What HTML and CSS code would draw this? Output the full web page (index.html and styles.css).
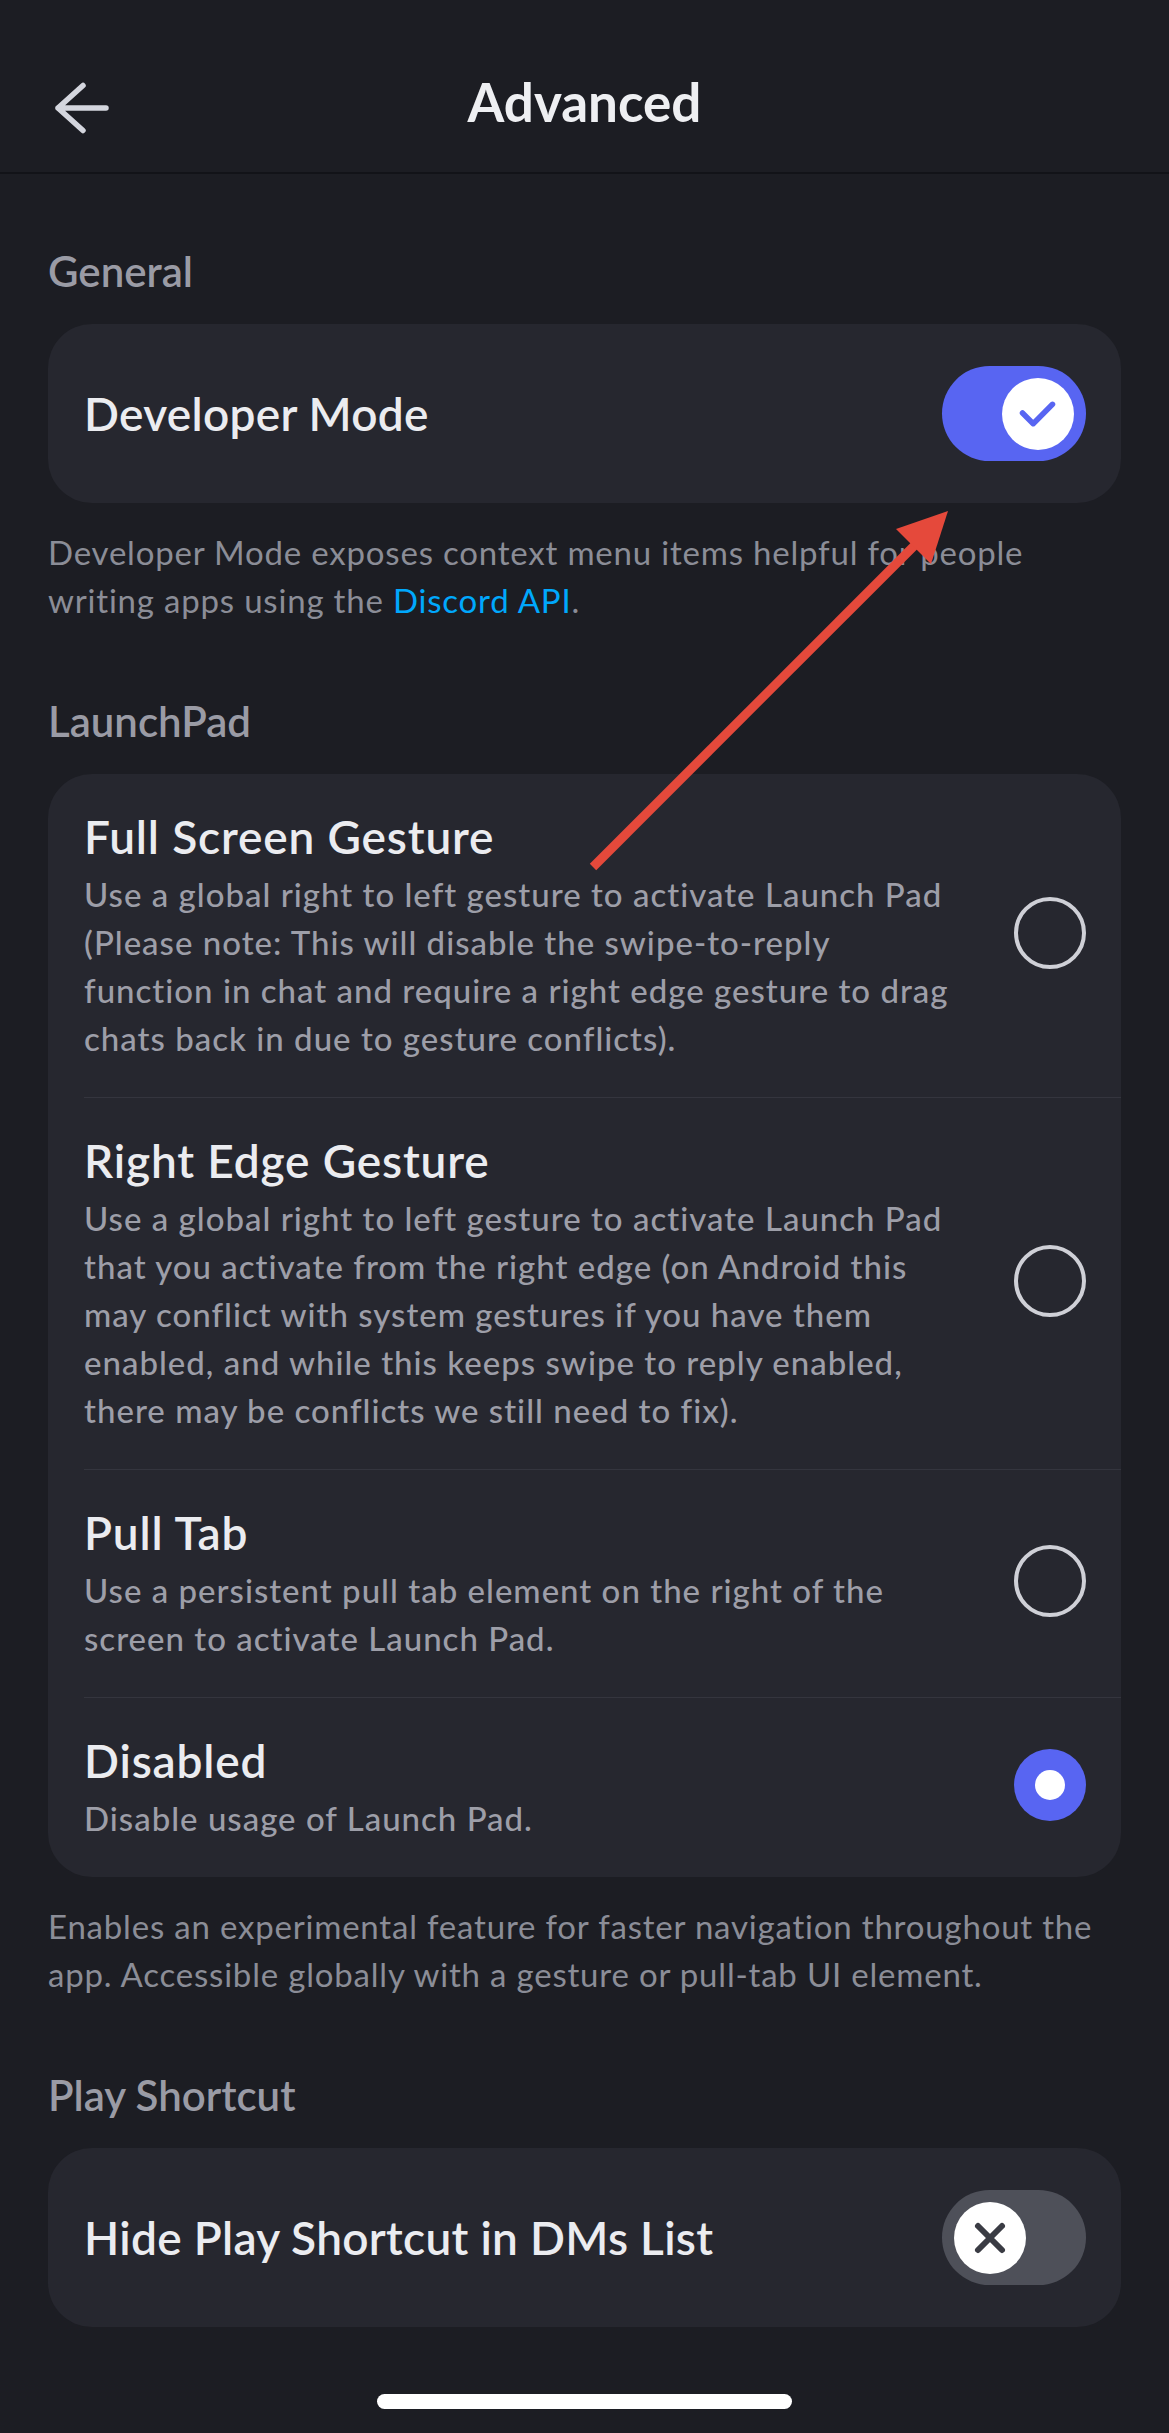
FILE: index.html
```html
<!DOCTYPE html>
<html lang="en">
<head>
<meta charset="utf-8">
<title>Advanced</title>
<link rel="stylesheet" href="styles.css">
</head>
<body>
<div class="screen">
  <header class="topbar">
    <button class="back" aria-label="Back">
      <svg width="60" height="56" viewBox="0 0 60 56"><path d="M30 5.5 L5 28 L30 50.5 M5 28 H53" fill="none" stroke="#d4d6de" stroke-width="5.5" stroke-linecap="round" stroke-linejoin="round"/></svg>
    </button>
    <h1 class="title">Advanced</h1>
    <span class="spacer"></span>
  </header>

  <main class="content">
    <section class="group">
      <h2 class="group-label">General</h2>
      <div class="card">
        <div class="row">
          <span class="row-title">Developer Mode</span>
          <span class="toggle on">
            <span class="knob">
              <svg width="72" height="72" viewBox="0 0 72 72"><polyline points="20.5,35 31.2,45.7 50.5,26.3" fill="none" stroke="#5865f2" stroke-width="5.5" stroke-linecap="round" stroke-linejoin="round"/></svg>
            </span>
          </span>
        </div>
      </div>
      <p class="hint">Developer Mode exposes context menu items helpful for people<br>writing apps using the <a class="link">Discord API</a>.</p>
    </section>

    <section class="group">
      <h2 class="group-label">LaunchPad</h2>
      <div class="card">
        <div class="option">
          <div class="option-text">
            <div class="option-title">Full Screen Gesture</div>
            <div class="option-desc">Use a global right to left gesture to activate Launch Pad<br>(Please note: This will disable the swipe-to-reply<br>function in chat and require a right edge gesture to drag<br>chats back in due to gesture conflicts).</div>
          </div>
          <span class="radio"></span>
        </div>
        <div class="option">
          <div class="option-text">
            <div class="option-title">Right Edge Gesture</div>
            <div class="option-desc">Use a global right to left gesture to activate Launch Pad<br>that you activate from the right edge (on Android this<br>may conflict with system gestures if you have them<br>enabled, and while this keeps swipe to reply enabled,<br>there may be conflicts we still need to fix).</div>
          </div>
          <span class="radio"></span>
        </div>
        <div class="option">
          <div class="option-text">
            <div class="option-title">Pull Tab</div>
            <div class="option-desc">Use a persistent pull tab element on the right of the<br>screen to activate Launch Pad.</div>
          </div>
          <span class="radio"></span>
        </div>
        <div class="option">
          <div class="option-text">
            <div class="option-title">Disabled</div>
            <div class="option-desc">Disable usage of Launch Pad.</div>
          </div>
          <span class="radio checked"></span>
        </div>
      </div>
      <p class="hint">Enables an experimental feature for faster navigation throughout the<br>app. Accessible globally with a gesture or pull-tab UI element.</p>
    </section>

    <section class="group">
      <h2 class="group-label">Play Shortcut</h2>
      <div class="card">
        <div class="row">
          <span class="row-title">Hide Play Shortcut in DMs List</span>
          <span class="toggle off">
            <span class="knob">
              <svg width="72" height="72" viewBox="0 0 72 72"><path d="M24 24 L48 48 M48 24 L24 48" fill="none" stroke="#3a3c44" stroke-width="6" stroke-linecap="round"/></svg>
            </span>
          </span>
        </div>
      </div>
    </section>
  </main>

  <div class="home-indicator"></div>

  <svg class="annotation" width="1169" height="2433" viewBox="0 0 1169 2433" aria-hidden="true">
    <line x1="593" y1="867" x2="918" y2="542" stroke="#e5493b" stroke-width="9"/>
    <polygon points="948,511 896,529 931,564" fill="#e5493b"/>
  </svg>
</div>
</body>
</html>
```

FILE: styles.css
```css
* {
  box-sizing: border-box;
  margin: 0;
  padding: 0;
}

html,
body {
  background: #1c1d23;
}

body {
  font-family: Lato, "Noto Sans", sans-serif;
  color: #ebecf0;
}

.screen {
  position: relative;
  width: 1169px;
  min-height: 2433px;
  padding-bottom: 24px;
}

/* Top bar */
.topbar {
  height: 174px;
  border-bottom: 2px solid #121318;
  display: grid;
  grid-template-columns: 1fr auto 1fr;
  align-items: center;
  padding-top: 32px;
}

.back {
  justify-self: start;
  margin-left: 53px;
  margin-top: 12px;
  background: none;
  border: 0;
  display: flex;
}

.title {
  font-size: 53px;
  font-weight: 700;
  line-height: 64px;
  color: #eeeff2;
}

/* Content */
.content {
  padding: 72px 48px 0;
}

.group + .group {
  margin-top: 72px;
}

.group-label {
  font-size: 42px;
  font-weight: 600;
  line-height: 50px;
  color: #9a9ba5;
  margin-bottom: 28px;
}

.card {
  background: #26272f;
  border-radius: 44px;
}

.row {
  display: flex;
  align-items: center;
  justify-content: space-between;
  height: 179px;
  padding: 0 35px 0 36px;
}

.row-title {
  font-size: 46px;
  font-weight: 600;
  line-height: 56px;
  letter-spacing: 0.3px;
  color: #ebecf0;
}

.hint {
  margin-top: 25px;
  font-size: 33px;
  line-height: 48px;
  letter-spacing: 0.8px;
  color: #8b8d97;
}

.link {
  color: #00a8fc;
  text-decoration: none;
}

/* Radio options */
.option {
  display: flex;
  align-items: center;
  gap: 40px;
  margin-left: 36px;
  padding: 30px 35px 35px 0;
}

.option + .option {
  border-top: 1px solid #34353e;
}

.option-text {
  flex: 1;
}

.option-title {
  font-size: 46px;
  font-weight: 600;
  line-height: 66px;
  letter-spacing: 0.85px;
  color: #ebecf0;
}

.option-desc {
  font-size: 33px;
  font-weight: 500;
  line-height: 48px;
  letter-spacing: 1px;
  color: #9d9ea8;
}

.radio {
  flex: none;
  width: 72px;
  height: 72px;
  border-radius: 50%;
  border: 4.5px solid #cfd0d7;
}

.radio.checked {
  border: 0;
  background: #5865f2;
  display: flex;
  align-items: center;
  justify-content: center;
}

.radio.checked::after {
  content: "";
  width: 30px;
  height: 30px;
  border-radius: 50%;
  background: #ffffff;
}

/* Toggles */
.toggle {
  flex: none;
  width: 144px;
  height: 95px;
  border-radius: 48px;
  background: #5865f2;
  display: flex;
  align-items: center;
  padding: 0 12px;
}

.toggle.on {
  justify-content: flex-end;
}

.toggle.off {
  background: #4e5059;
  justify-content: flex-start;
}

.knob {
  width: 72px;
  height: 72px;
  border-radius: 50%;
  background: #ffffff;
  display: flex;
  align-items: center;
  justify-content: center;
}

/* iOS home indicator */
.home-indicator {
  width: 415px;
  height: 15px;
  border-radius: 8px;
  background: #ffffff;
  margin: 67px auto 0;
}

/* Red annotation arrow drawn over the screenshot */
.annotation {
  position: absolute;
  top: 0;
  left: 0;
  pointer-events: none;
}
```
